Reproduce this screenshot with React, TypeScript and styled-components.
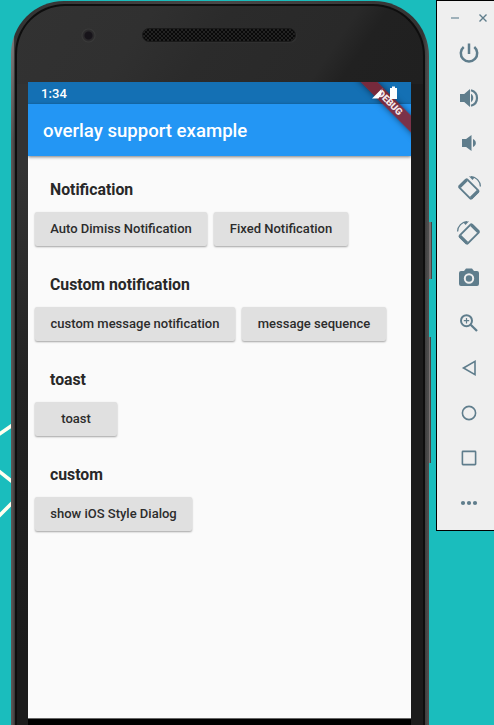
import React from 'react';
import styled, { createGlobalStyle } from 'styled-components';

const GlobalStyle = createGlobalStyle`
  * { box-sizing: border-box; }
  body { margin: 0; background: #1abdbd; overflow: hidden; }
`;

const Desktop = styled.main`
  position: relative;
  display: flex;
  align-items: flex-start;
  width: 494px;
  height: 725px;
  padding-left: 11px;
  overflow: hidden;
  background: #1abdbd;
  font-family: Roboto, 'Liberation Sans', sans-serif;
`;

const Wallpaper = styled.svg`
  position: absolute;
  left: 0;
  top: 420px;
`;

const PhoneRim = styled.section`
  position: relative;
  flex: none;
  width: 418px;
  height: 790px;
  margin-top: 1px;
  padding: 3px 4px 0;
  border-radius: 53px 55px 0 0;
  background:
    linear-gradient(180deg, rgba(160, 160, 160, 0.6) 20px, rgba(160, 160, 160, 0) 140px) 0 0 / 3px 140px no-repeat,
    linear-gradient(90deg, #5c5959 0, #514e4e 2px, #333 4px, #484848 50%, #333 412px, #4e4e4e 417px);
`;

const PhoneFace = styled.div`
  height: 100%;
  padding-left: 11px;
  border: 2px solid #0e0e0e;
  border-bottom: 0;
  border-radius: 50px 52px 0 0;
  background:
    linear-gradient(124deg, #323232 0, #303030 115px, #2b2b2b 180px, #292929 285px, #212121 310px, #202020 100%) 0 0 / 100% 78px no-repeat,
    linear-gradient(90deg, #1c1c1c 0, #1c1c1c 100%) 100% 76px / 50% 100% no-repeat,
    linear-gradient(180deg, #333 0, #333 160px, #222 380px, #1b1b1b 650px);
`;

const Earpiece = styled.div`
  display: flex;
  align-items: flex-start;
  height: 76px;
`;

const CameraLens = styled.div`
  width: 15px;
  height: 15px;
  margin: 22px 0 0 53px;
  border-radius: 50%;
  background: radial-gradient(circle, #17141a 0 3.5px, #29272a 4.5px, #2c2c2c 5.5px, #3a3a3a 6.5px, #303030 7.5px);
`;

const Speaker = styled.div`
  width: 154px;
  height: 14px;
  margin: 22px 0 0 46px;
  border: 1px solid #1a1a1a;
  border-radius: 7px;
  background:
    radial-gradient(circle, #090909 0 0.8px, transparent 1.2px) 1px 1px / 4px 4px,
    radial-gradient(circle, #090909 0 0.8px, transparent 1.2px) 3px 3px / 4px 4px,
    #222;
  box-shadow: 1px 1px 0 #303030;
`;

const Screen = styled.div`
  position: relative;
  display: flex;
  flex-direction: column;
  width: 383px;
  height: 637px;
  overflow: hidden;
  border-bottom: 1px solid #666;
  background: #fafafa;
`;

const BottomEdge = styled.div`
  width: 383px;
  height: 40px;
  background: #000;
`;

const StatusBar = styled.div`
  display: flex;
  flex: none;
  align-items: center;
  height: 22px;
  padding: 0 13px;
  background: #1470b4;
  color: #fff;
  font-size: 13px;
  font-weight: 500;
  letter-spacing: 0.1px;
`;

const StatusIcons = styled.svg`
  position: relative;
  z-index: 3;
  margin-left: auto;
`;

const AppBar = styled.header`
  z-index: 1;
  display: flex;
  flex: none;
  align-items: center;
  height: 52px;
  padding: 2px 15px 0;
  background: #2396f4;
  box-shadow: 0 1px 3px rgba(0, 0, 0, 0.5);
`;

const Title = styled.h1`
  margin: 0;
  color: #fff;
  font-size: 18.6px;
  font-weight: 500;
`;

const DebugBanner = styled.div`
  position: absolute;
  z-index: 2;
  left: 312px;
  top: 15px;
  width: 100px;
  height: 12px;
  transform: rotate(45deg);
  background: rgba(144, 25, 30, 0.8);
  box-shadow: 0 0 6px rgba(0, 0, 0, 0.5);
  color: #f5e8ea;
  font-size: 9.6px;
  font-weight: 900;
  line-height: 12px;
  text-align: center;
`;

const Group = styled.section`
  height: 95px;
  padding: 23px 7px 0;
`;

const GroupTitle = styled.h2`
  height: 22px;
  margin: 0 0 11px 15px;
  color: #282828;
  font-size: 15.8px;
  font-weight: 700;
  line-height: 22px;
`;

const ButtonRow = styled.div`
  display: flex;
  gap: 7px;
`;

const RaisedButton = styled.button<{ $width: number }>`
  width: ${({ $width }) => $width}px;
  height: 34px;
  padding: 0;
  border: 0;
  border-radius: 2px;
  background: #e0e0e0;
  box-shadow: 0 1px 2px rgba(0, 0, 0, 0.35);
  color: #2c2c2c;
  font: 500 13px/34px Roboto, sans-serif;
  white-space: nowrap;
`;

const SideButton = styled.div<{ $top: number; $height: number; $width: number }>`
  position: absolute;
  left: 418px;
  top: ${({ $top }) => $top}px;
  width: ${({ $width }) => $width}px;
  height: ${({ $height }) => $height}px;
  border-right: 1px solid #444;
  background: #777171;
`;

const Toolbar = styled.aside`
  flex: none;
  width: 68px;
  height: 531px;
  margin-left: 7px;
  border: 1px solid #000;
  background: #efefef;
  color: #5f7d8c;
`;

const WindowControls = styled.div`
  display: flex;
  gap: 16px;
  height: 29px;
  padding: 11px 0 0 12px;
`;

const ToolButton = styled.div`
  display: flex;
  justify-content: center;
  height: 45px;
  padding-top: 8px;
  width: 64px;
`;

const Glyph = ({ children }: { children: React.ReactNode }) => (
  <ToolButton>
    <svg width="30" height="30" viewBox="-15 -15 30 30" fill="none" stroke="currentColor" strokeWidth="2">
      {children}
    </svg>
  </ToolButton>
);

const RotateShape = () => (
  <>
    <g transform="translate(-.2 1) rotate(45)">
      <rect x="-8.6" y="-5.7" width="17.2" height="11.4" rx="1" strokeWidth="1.9" />
      <path d="M-8-5V5M8-5V5" strokeWidth="3.2" />
    </g>
    <path d="M2-11.3C7-11 11.3-7 11.4-1.5" strokeWidth="1.3" />
    <path d="M0-11.8L6-11L3.5-8Z" fill="currentColor" stroke="none" />
  </>
);

const Speakers = ({ loud }: { loud: boolean }) => (
  <g fill="currentColor" stroke="none">
    {loud ? (
      <>
        <path d="M-9-4H-4.8L1-9V9L-4.8 4H-9Z" />
        <path d="M2-4.2C5-2.5 5 2.5 2 4.2Z" />
        <path d="M2-7.8C10-5.5 10 5.5 2 7.8" fill="none" stroke="currentColor" strokeWidth="2.2" />
      </>
    ) : (
      <>
        <path d="M-7-4H-2.9L2.5-8V8L-2.9 4H-7Z" />
        <path d="M4-4C7.8-2.3 7.8 2.3 4 4Z" />
      </>
    )}
  </g>
);

const sections = [
  { title: 'Notification', buttons: [['Auto Dimiss Notification', 172], ['Fixed Notification', 134]] },
  { title: 'Custom notification', buttons: [['custom message notification', 200], ['message sequence', 144]] },
  { title: 'toast', buttons: [['toast', 82]] },
  { title: 'custom', buttons: [['show iOS Style Dialog', 157]] },
] as { title: string; buttons: [string, number][] }[];

export default function App() {
  return (
    <>
      <GlobalStyle />
      <Desktop>
        <Wallpaper width="14" height="100" viewBox="0 0 14 100" stroke="#fffff0" strokeWidth="3.6">
          <path d="M-2 15L14 4M-2 50.5L14 63M-2 97L14 81" />
        </Wallpaper>
        <PhoneRim>
          <SideButton $top={221} $height={57} $width={3} />
          <SideButton $top={336} $height={126} $width={2} />
          <PhoneFace>
            <Earpiece>
              <CameraLens />
              <Speaker />
            </Earpiece>
            <Screen>
              <StatusBar>
                1:34
                <StatusIcons width="27" height="16" viewBox="0 0 27 16" fill="#fff">
                  <path d="M1 13.5H7.5L10 10V4.5Z" />
                  <path d="M10 4.5L11.5 3V12H10Z" opacity=".35" />
                  <path d="M19 3H21V1.5H24V3H26V14H19Z" />
                </StatusIcons>
              </StatusBar>
              <AppBar><Title>overlay support example</Title></AppBar>
              <DebugBanner>DEBUG</DebugBanner>
              {sections.map(({ title, buttons }) => (
                <Group key={title}>
                  <GroupTitle>{title}</GroupTitle>
                  <ButtonRow>
                    {buttons.map(([label, width]) => (
                      <RaisedButton key={label} $width={width}>{label}</RaisedButton>
                    ))}
                  </ButtonRow>
                </Group>
              ))}
            </Screen>
            <BottomEdge />
          </PhoneFace>
        </PhoneRim>
        <Toolbar>
          <WindowControls>
            <svg width="12" height="12" viewBox="-6 -6 12 12"><path d="M-4 0H4" stroke="#8ba1ac" strokeWidth="1.6" /></svg>
            <svg width="12" height="12" viewBox="-6 -6 12 12"><path d="M-3.5-3.5L3.5 3.5M3.5-3.5L-3.5 3.5" stroke="currentColor" strokeWidth="1.4" /></svg>
          </WindowControls>
          <Glyph><path d="M0-9.5V1M-5.3-6A8.2 8.2 0 1 0 5.3-6" strokeWidth="2.5" /></Glyph>
          <Glyph><Speakers loud /></Glyph>
          <Glyph><Speakers loud={false} /></Glyph>
          <Glyph><RotateShape /></Glyph>
          <Glyph><g transform="scale(-1 1)"><RotateShape /></g></Glyph>
          <Glyph>
            <path d="M-8-7H-5L-3-9.5H3L5-7H8Q10-7 10-5V6Q10 8 8 8H-8Q-10 8-10 6V-5Q-10-7-8-7Z" fill="currentColor" stroke="none" />
            <circle cy=".5" r="4.2" stroke="#efefef" />
          </Glyph>
          <Glyph><circle cx="-2.5" cy="-2.3" r="5.5" /><path d="M-2.5-5V.4M-5.2-2.3H.2" strokeWidth="1.2" /><path d="M1.7 1.8L8 8" strokeWidth="2.3" /></Glyph>
          <Glyph><path d="M-5.5 0L6-6.7V6.7Z" strokeWidth="1.6" /></Glyph>
          <Glyph><circle r="6.6" strokeWidth="1.6" /></Glyph>
          <Glyph><rect x="-6.6" y="-6.6" width="13.2" height="13.2" rx=".6" strokeWidth="1.6" /></Glyph>
          <Glyph><g fill="currentColor" stroke="none"><circle cx="-6" r="2.1" /><circle r="2.1" /><circle cx="6" r="2.1" /></g></Glyph>
        </Toolbar>
      </Desktop>
    </>
  );
}
